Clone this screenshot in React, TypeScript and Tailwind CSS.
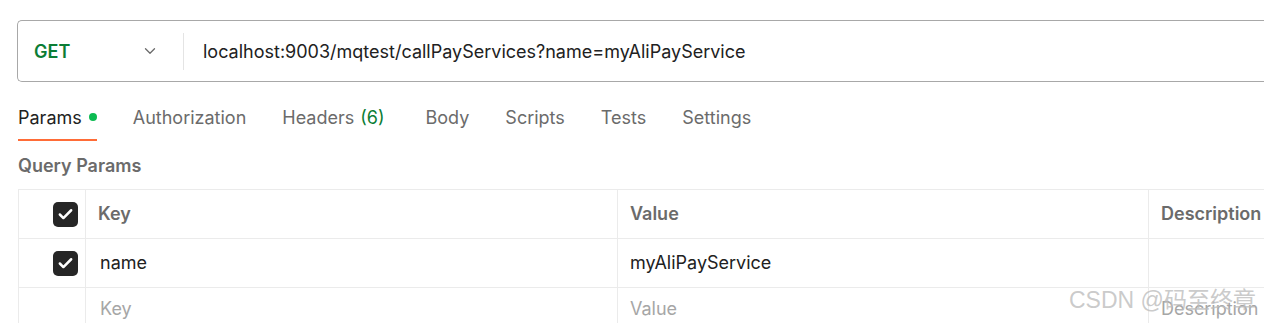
import { ChevronDown, Check } from "lucide-react";

const tabs = [
  { label: "Params", active: true, dot: true },
  { label: "Authorization" },
  { label: "Headers", count: "(6)" },
  { label: "Body" },
  { label: "Scripts" },
  { label: "Tests" },
  { label: "Settings" },
];

function Checkbox() {
  return (
    <div className="flex h-[25px] w-[25px] items-center justify-center rounded-[5px] bg-[#262626]">
      <Check size={17} strokeWidth={3.5} className="text-white" />
    </div>
  );
}

export default function App() {
  return (
    <div
      className="relative h-[323px] w-[1264px] overflow-hidden bg-white text-[#212121]"
      style={{ fontFamily: "Inter, 'Noto Sans', sans-serif" }}
    >
      {/* URL bar */}
      <div className="pl-[17px] pt-[20px]">
        <div className="flex h-[62px] items-center rounded-l-[5px] border border-r-0 border-[#a8a8a8]">
          <div className="flex w-[165px] items-center justify-between pl-[16px] pr-[24px]">
            <span className="text-[18px] font-semibold text-[#0b7d35]">GET</span>
            <ChevronDown size={18} strokeWidth={1.75} className="text-[#6b6b6b]" />
          </div>
          <div className="h-[37px] w-px bg-[#e4e4e4]" />
          <span className="pl-[19px] text-[18px] text-[#212121]">
            localhost:9003/mqtest/callPayServices?name=myAliPayService
          </span>
        </div>
      </div>

      {/* Tabs */}
      <div className="mt-[19px] flex pl-[18px]">
        {tabs.map((tab) => (
          <div
            key={tab.label}
            className={
              "flex h-[40px] items-start gap-[6px] border-b-2 pt-[3px] text-[18px] " +
              (tab.count ? "mr-[41px] " : "mr-[36px] ") +
              (tab.active
                ? "border-[#ff6c37] text-[#212121]"
                : "border-transparent text-[#6b6b6b]")
            }
          >
            <span>{tab.label}</span>
            {tab.dot && <span className="ml-[1px] mt-[9px] h-[8px] w-[8px] rounded-full bg-[#0cbb52]" />}
            {tab.count && <span className="text-[#0b7d35]">{tab.count}</span>}
          </div>
        ))}
      </div>

      {/* Query params */}
      <div className="pl-[18px] pt-[11px] text-[18px] font-semibold text-[#6b6b6b]">
        Query Params
      </div>

      <div className="ml-[18px] mt-[10px] border-l border-t border-[#ebebeb] text-[18px]">
        <div className="flex h-[49px] border-b border-[#ebebeb]">
          <div className="flex w-[67px] items-center justify-end border-r border-[#ebebeb] pr-[7px]">
            <Checkbox />
          </div>
          <div className="flex w-[532px] items-center border-r border-[#ebebeb] pb-[1px] pl-[12px] font-semibold text-[#6b6b6b]">
            Key
          </div>
          <div className="flex w-[531px] items-center border-r border-[#ebebeb] pb-[1px] pl-[12px] font-semibold text-[#6b6b6b]">
            Value
          </div>
          <div className="flex flex-1 items-center pb-[1px] pl-[12px] font-semibold text-[#6b6b6b]">
            Description
          </div>
        </div>
        <div className="flex h-[49px] border-b border-[#ebebeb]">
          <div className="flex w-[67px] items-center justify-end border-r border-[#ebebeb] pr-[7px]">
            <Checkbox />
          </div>
          <div className="flex w-[532px] items-center border-r border-[#ebebeb] pb-[1px] pl-[14px]">name</div>
          <div className="flex w-[531px] items-center border-r border-[#ebebeb] pb-[1px] pl-[12px]">
            myAliPayService
          </div>
          <div className="flex-1" />
        </div>
        <div className="flex h-[40px] text-[#a6a6a6]">
          <div className="w-[67px] border-r border-[#ebebeb]" />
          <div className="flex w-[532px] items-center border-r border-[#ebebeb] pl-[14px]">Key</div>
          <div className="flex w-[531px] items-center border-r border-[#ebebeb] pl-[12px]">Value</div>
          <div className="flex flex-1 items-center pl-[12px]">Description</div>
        </div>
      </div>

      {/* watermark */}
      <div
        className="pointer-events-none absolute left-[1069px] top-[285px] text-[23px] leading-[30px] text-[#bdbdbd]/80"
        style={{ fontFamily: "'Liberation Sans', 'Noto Sans CJK SC', sans-serif" }}
      >
        CSDN @码至终章
      </div>
    </div>
  );
}
